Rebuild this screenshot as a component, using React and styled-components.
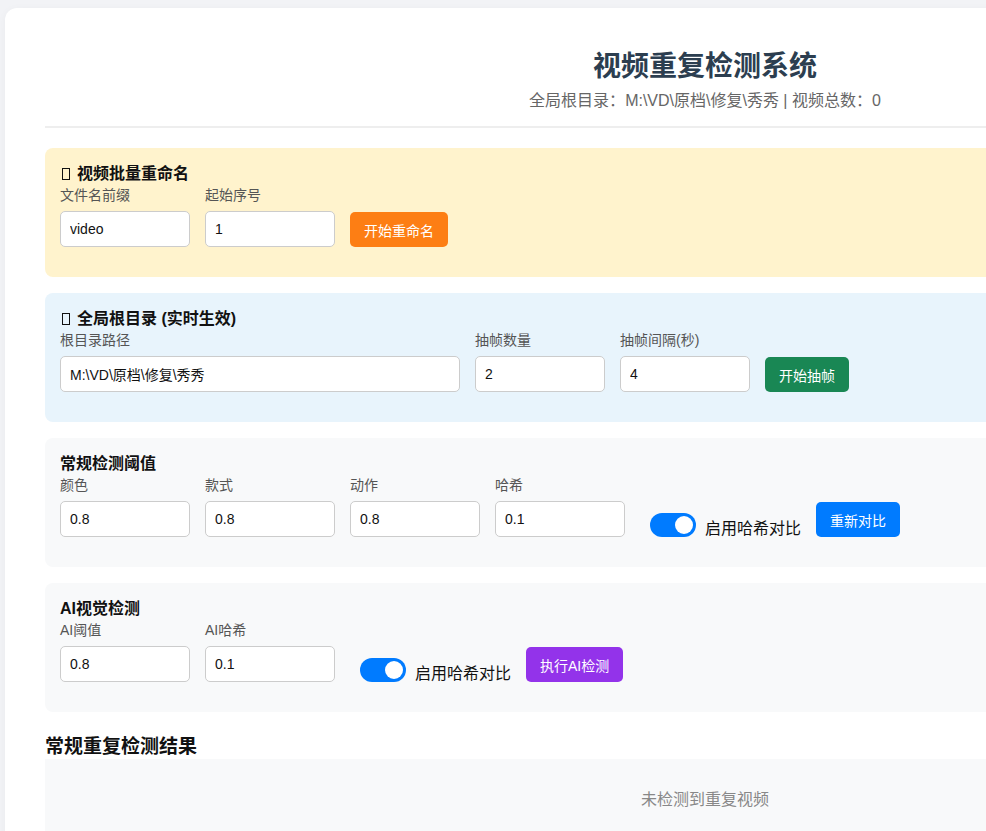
import React, { useState } from 'react';
import styled, { createGlobalStyle } from 'styled-components';

const GlobalStyle = createGlobalStyle`
  html, body {
    margin: 0;
    overflow: hidden;
  }
  body {
    background: #f2f3f6;
    padding: 8px 0 0 5px;
    font-family: "Liberation Sans", "Noto Sans CJK SC", sans-serif;
    color: #111;
  }
`;

const Page = styled.div`
  width: 1400px;
  box-sizing: border-box;
  background: #fff;
  border-radius: 12px;
  box-shadow: 0 2px 10px rgba(0, 0, 0, 0.04);
  padding: 40px 40px 30px;
`;

const Header = styled.header`
  text-align: center;
  padding-bottom: 15px;
  border-bottom: 2px solid #eeeeee;
  margin-bottom: 20px;
`;

const Title = styled.h1`
  margin: 0;
  font-size: 28px;
  line-height: 38px;
  font-weight: 700;
  color: #2c3e50;
`;

const Subtitle = styled.p`
  margin: 5px 0 0;
  font-size: 16px;
  line-height: 20px;
  color: #666;
`;

const tones = {
  warn: '#fff3cd',
  info: '#e8f4fc',
  plain: '#f8f9fa',
};

const Section = styled.section`
  background: ${(p) => tones[p.tone] || tones.plain};
  border-radius: 8px;
  padding: 15px 15px 30px;
  margin-bottom: 16px;
`;

const SectionTitle = styled.h3`
  margin: 0;
  font-size: 16px;
  line-height: 22px;
  font-weight: 700;
  color: #111;
`;

/* placeholder box for the missing emoji glyph */
const Glyph = styled.span`
  display: inline-block;
  width: 6px;
  height: 10px;
  border: 1.3px solid #111;
  margin: 0 7px 0 2px;
  vertical-align: -1px;
`;

const Row = styled.div`
  display: flex;
  align-items: flex-end;
  gap: 15px;
`;

const Field = styled.div`
  display: flex;
  flex-direction: column;
`;

const Label = styled.label`
  font-size: 14px;
  line-height: 20px;
  color: #555;
  margin-bottom: 6px;
`;

const Input = styled.input`
  width: ${(p) => p.$w || 130}px;
  height: 36px;
  box-sizing: border-box;
  border: 1px solid #cccccc;
  border-radius: 5px;
  background: #fff;
  padding: 0 9px;
  font-size: 14px;
  font-family: inherit;
  color: #111;
  outline: none;
`;

const btnColors = {
  orange: '#fd7e14',
  green: '#198754',
  blue: '#007bff',
  purple: '#9333ea',
};

const Button = styled.button`
  height: 35px;
  padding: 0 14px;
  border: none;
  border-radius: 5px;
  background: ${(p) => btnColors[p.$color]};
  color: #fff;
  font-size: 14px;
  font-family: inherit;
  cursor: pointer;
`;

const SwitchLabel = styled.label`
  display: flex;
  align-items: center;
  gap: 9px;
  margin-left: 10px;
  height: 24px;
  font-size: 16px;
  color: #111;
  cursor: pointer;
`;

const SwitchText = styled.span`
  padding-top: 3px;
`;

const Track = styled.span`
  position: relative;
  width: 46px;
  height: 24px;
  border-radius: 12px;
  background: ${(p) => (p.$on ? '#007bff' : '#ccc')};
  flex-shrink: 0;

  &::after {
    content: '';
    position: absolute;
    top: 3px;
    left: ${(p) => (p.$on ? '25px' : '3px')};
    width: 18px;
    height: 18px;
    border-radius: 50%;
    background: #fff;
  }
`;

const ResultTitle = styled.h2`
  margin: 23px 0 0;
  font-size: 19px;
  line-height: 24px;
  font-weight: 700;
  color: #111;
`;

const Empty = styled.div`
  background: #f8f9fa;
  padding: 30px;
  text-align: center;
  font-size: 16px;
  line-height: 22px;
  color: #888;
`;

function Toggle({ on, onToggle }) {
  return (
    <SwitchLabel onClick={onToggle}>
      <Track $on={on} />
      <SwitchText>启用哈希对比</SwitchText>
    </SwitchLabel>
  );
}

export default function App() {
  const root = 'M:\\VD\\原档\\修复\\秀秀';
  const [hashOn, setHashOn] = useState(true);
  const [aiHashOn, setAiHashOn] = useState(true);

  return (
    <>
      <GlobalStyle />
      <Page>
        <Header>
          <Title>视频重复检测系统</Title>
          <Subtitle>全局根目录：{root} | 视频总数：0</Subtitle>
        </Header>

        <Section tone="warn">
          <SectionTitle>
            <Glyph />
            视频批量重命名
          </SectionTitle>
          <Row>
            <Field>
              <Label>文件名前缀</Label>
              <Input defaultValue="video" />
            </Field>
            <Field>
              <Label>起始序号</Label>
              <Input defaultValue="1" />
            </Field>
            <Button $color="orange">开始重命名</Button>
          </Row>
        </Section>

        <Section tone="info">
          <SectionTitle>
            <Glyph />
            全局根目录 (实时生效)
          </SectionTitle>
          <Row>
            <Field>
              <Label>根目录路径</Label>
              <Input $w={400} defaultValue={root} />
            </Field>
            <Field>
              <Label>抽帧数量</Label>
              <Input defaultValue="2" />
            </Field>
            <Field>
              <Label>抽帧间隔(秒)</Label>
              <Input defaultValue="4" />
            </Field>
            <Button $color="green">开始抽帧</Button>
          </Row>
        </Section>

        <Section tone="plain">
          <SectionTitle>常规检测阈值</SectionTitle>
          <Row>
            <Field>
              <Label>颜色</Label>
              <Input defaultValue="0.8" />
            </Field>
            <Field>
              <Label>款式</Label>
              <Input defaultValue="0.8" />
            </Field>
            <Field>
              <Label>动作</Label>
              <Input defaultValue="0.8" />
            </Field>
            <Field>
              <Label>哈希</Label>
              <Input defaultValue="0.1" />
            </Field>
            <Toggle on={hashOn} onToggle={() => setHashOn(!hashOn)} />
            <Button $color="blue">重新对比</Button>
          </Row>
        </Section>

        <Section tone="plain">
          <SectionTitle>AI视觉检测</SectionTitle>
          <Row>
            <Field>
              <Label>AI阈值</Label>
              <Input defaultValue="0.8" />
            </Field>
            <Field>
              <Label>AI哈希</Label>
              <Input defaultValue="0.1" />
            </Field>
            <Toggle on={aiHashOn} onToggle={() => setAiHashOn(!aiHashOn)} />
            <Button $color="purple">执行AI检测</Button>
          </Row>
        </Section>

        <ResultTitle>常规重复检测结果</ResultTitle>
        <Empty>未检测到重复视频</Empty>
      </Page>
    </>
  );
}
